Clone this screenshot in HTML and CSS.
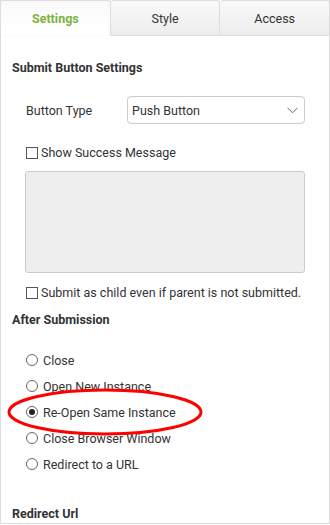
FILE: index.html
```html
<!DOCTYPE html>
<html>
<head>
<meta charset="utf-8">
<link rel="stylesheet" href="styles.css">
</head>
<body>
<div class="panel">
  <div class="tabs">
    <div class="tab active">Settings</div>
    <div class="tab">Style</div>
    <div class="tab">Access</div>
  </div>
  <div class="content">
    <div class="heading h1">Submit Button Settings</div>
    <div class="field-row">
      <span class="label">Button Type</span>
      <div class="select">
        <span>Push Button</span>
        <svg class="chev" width="11" height="7" viewBox="0 0 11 7"><path d="M0.5 0.8 L5.5 5.8 L10.5 0.8" fill="none" stroke="#666" stroke-width="1"/></svg>
      </div>
    </div>
    <div class="check-row cr1"><span class="box"></span>Show Success Message</div>
    <div class="textarea"></div>
    <div class="check-row cr2"><span class="box"></span>Submit as child even if parent is not submitted.</div>
    <div class="heading h2">After Submission</div>
    <div class="radios">
      <div class="radio-row"><span class="radio"></span>Close</div>
      <div class="radio-row"><span class="radio"></span>Open New Instance</div>
      <div class="radio-row"><span class="radio checked"></span>Re-Open Same Instance</div>
      <div class="radio-row"><span class="radio"></span>Close Browser Window</div>
      <div class="radio-row"><span class="radio"></span>Redirect to a URL</div>
    </div>
    <div class="heading h3">Redirect Url</div>
  </div>
  <svg class="ellipse" width="330" height="525" viewBox="0 0 330 525"><ellipse cx="105" cy="412" rx="96" ry="22" fill="none" stroke="#f00" stroke-width="3"/></svg>
</div>
</body>
</html>
```

FILE: styles.css
```css
html, body {
  margin: 0;
  padding: 0;
  background: #fff;
}
body {
  font-family: Roboto, "Liberation Sans", sans-serif;
  font-size: 12.5px;
  color: #333;
}
.panel {
  position: relative;
  width: 330px;
  height: 524px;
  box-sizing: border-box;
  border: 1px solid #ddd;
  border-top: none;
  overflow: hidden;
}
.tabs {
  display: flex;
  height: 36px;
  margin: 0 -1px;
}
.tab {
  flex: 1;
  display: flex;
  align-items: center;
  justify-content: center;
  box-sizing: border-box;
  border: 1px solid #ddd;
  border-left: none;
  border-radius: 3px 3px 0 0;
  background: linear-gradient(#fafafa, #ececec);
  font-size: 12.5px;
  color: #333;
}
.tab:first-child {
  border-left: 1px solid #ddd;
}
.tab.active {
  background: linear-gradient(#fafafa, #fff);
  border-bottom-color: transparent;
  color: #7cb342;
  font-weight: bold;
}
.content {
  padding: 0 0 0 11px;
}
.heading {
  font-weight: bold;
  line-height: 16px;
}
.h1 { margin-top: 24px; }
.field-row {
  display: flex;
  align-items: center;
  margin-top: 20px;
  padding-left: 14px;
  height: 28px;
}
.label {
  width: 101px;
}
.select {
  width: 178px;
  height: 28px;
  box-sizing: border-box;
  border: 1px solid #ccc;
  border-radius: 4px;
  display: flex;
  align-items: center;
  justify-content: space-between;
  padding: 0 6px 0 4px;
}
.chev {
  display: block;
}
.check-row {
  display: flex;
  align-items: center;
  line-height: 16px;
  padding-left: 14px;
}
.cr1 { margin-top: 21px; }
.cr2 { margin-top: 12px; }
.box {
  width: 12px;
  height: 12px;
  box-sizing: border-box;
  border: 1px solid #555;
  margin-right: 3px;
}
.textarea {
  margin: 10px 0 0 13px;
  width: 280px;
  height: 102px;
  box-sizing: border-box;
  background: #eee;
  border: 1px solid #ccc;
  border-radius: 3px;
}
.h2 { margin-top: 11px; }
.radios {
  margin-top: 19px;
}
.radio-row {
  display: flex;
  align-items: center;
  height: 26px;
  padding-left: 14px;
}
.radio {
  width: 12px;
  height: 12px;
  box-sizing: border-box;
  border: 1px solid #666;
  border-radius: 50%;
  margin-right: 5px;
  display: flex;
  align-items: center;
  justify-content: center;
}
.radio.checked::after {
  content: "";
  width: 6px;
  height: 6px;
  border-radius: 50%;
  background: #222;
}
.h3 { margin-top: 29px; }
.ellipse {
  position: absolute;
  left: -1px;
  top: 0;
  pointer-events: none;
}
```
